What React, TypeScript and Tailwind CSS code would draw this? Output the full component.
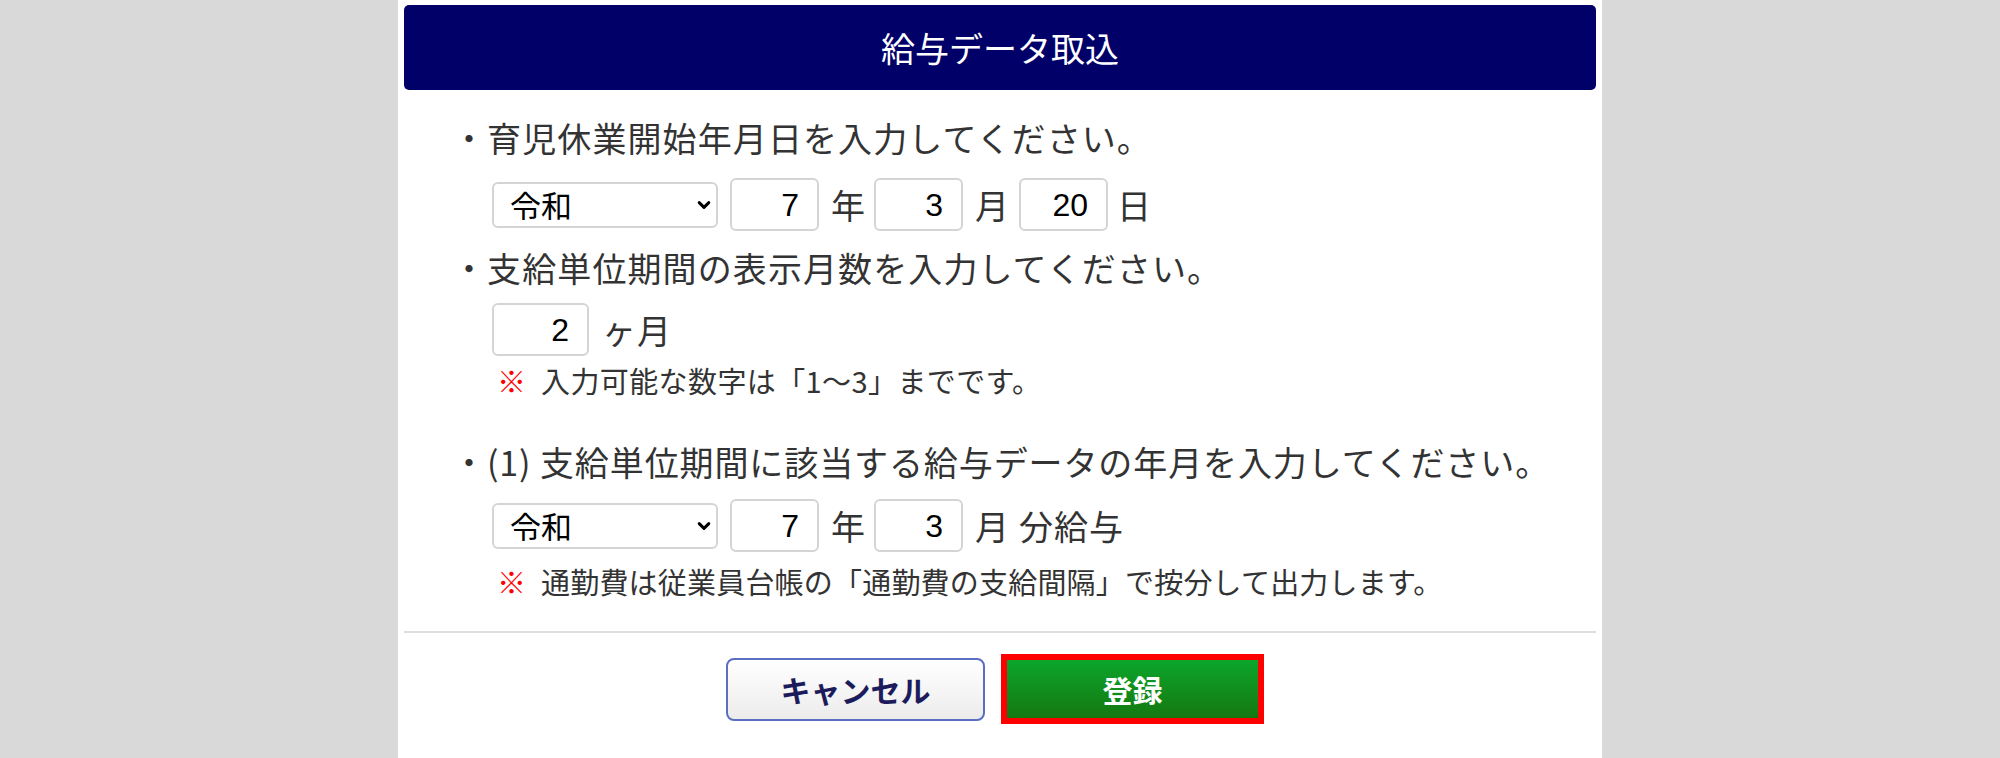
import React from "react";

const jp = { fontFamily: '"Noto Sans CJK JP", "Noto Sans", sans-serif' };

function Chevron() {
  return (
    <svg width="14" height="10" viewBox="0 0 14 10" className="absolute right-[7px] top-1/2 -translate-y-1/2 pointer-events-none">
      <path d="M2.2 2.6 L7 7.4 L11.8 2.6" fill="none" stroke="#000" strokeWidth="3" strokeLinecap="round" strokeLinejoin="round" />
    </svg>
  );
}

function EraSelect() {
  return (
    <div className="relative w-[226px] h-[46px]">
      <select
        defaultValue="令和"
        className="appearance-none w-full h-full border-2 border-[#d4d4d4] rounded-[6px] bg-white pl-[16px] text-[31px] text-black leading-none outline-none"
        style={jp}
      >
        <option>令和</option>
        <option>平成</option>
      </select>
      <Chevron />
    </div>
  );
}

function NumBox({ value, w }: { value: string; w: string }) {
  return (
    <div
      className={`${w} h-[53px] border-2 border-[#d4d4d4] rounded-[6px] bg-white flex items-center justify-end pr-[18px] text-[32px] text-black leading-none`}
      style={{ fontFamily: '"Liberation Sans", Arial, sans-serif' }}
    >
      {value}
    </div>
  );
}

export default function App() {
  return (
    <div className="w-full h-[758px] bg-[#d9d9d9] overflow-hidden" style={jp}>
      <div className="w-[1204px] h-[758px] mx-auto bg-white px-[6px] pt-[5px] flex flex-col">
        <div className="h-[85px] rounded-[5px] bg-[#000068] text-white text-[34px] leading-none flex items-center justify-center">
          給与データ取込
        </div>

        <div className="pl-[48px] text-[#333] flex flex-col">
          <div className="mt-[28px] h-[40px] flex items-center text-[34px] tracking-[1.1px] leading-none">
            ・育児休業開始年月日を入力してください。
          </div>

          <div className="mt-[20px] h-[53px] flex items-center pl-[40px] text-[34px] leading-none">
            <EraSelect />
            <div className="ml-[12px]"><NumBox value="7" w="w-[89px]" /></div>
            <span className="ml-[12px]">年</span>
            <div className="ml-[9px]"><NumBox value="3" w="w-[89px]" /></div>
            <span className="ml-[12px]">月</span>
            <div className="ml-[10px]"><NumBox value="20" w="w-[89px]" /></div>
            <span className="ml-[9px]">日</span>
          </div>

          <div className="mt-[17px] h-[40px] flex items-center text-[34px] tracking-[1.1px] leading-none">
            ・支給単位期間の表示月数を入力してください。
          </div>

          <div className="mt-[16px] h-[51px] flex items-center pl-[40px] text-[34px] leading-none">
            <NumBox value="2" w="w-[97px]" />
            <span className="ml-[13px] tracking-[1px]">ヶ月</span>
          </div>

          <div className="mt-[10px] h-[30px] flex items-center pl-[45px] text-[29px] leading-none">
            <span className="text-[#ff0000] font-bold">※</span>
            <span className="ml-[15px] tracking-[0.4px]">入力可能な数字は「1～3」までです。</span>
          </div>

          <div className="mt-[47px] h-[40px] flex items-center text-[34px] tracking-[0.9px] leading-none">
            ・(1) 支給単位期間に該当する給与データの年月を入力してください。
          </div>

          <div className="mt-[17px] h-[53px] flex items-center pl-[40px] text-[34px] leading-none">
            <EraSelect />
            <div className="ml-[12px]"><NumBox value="7" w="w-[89px]" /></div>
            <span className="ml-[12px]">年</span>
            <div className="ml-[9px]"><NumBox value="3" w="w-[89px]" /></div>
            <span className="ml-[12px]">月</span>
            <span className="ml-[10px] tracking-[1px]">分給与</span>
          </div>

          <div className="mt-[14px] h-[30px] flex items-center pl-[45px] text-[29px] leading-none">
            <span className="text-[#ff0000] font-bold">※</span>
            <span className="ml-[15px] tracking-[0.2px]">通勤費は従業員台帳の「通勤費の支給間隔」で按分して出力します。</span>
          </div>
        </div>

        <div className="mt-[35px] h-[2px] bg-[#dedede]" />

        <div className="mt-[21px] flex items-center justify-center gap-[16px] pr-[10px]">
          <button
            className="w-[259px] h-[63px] rounded-[8px] border-2 border-[#5b6fc2] bg-gradient-to-b from-white to-[#ececec] text-[30px] font-bold text-[#1c1c5c] leading-none flex items-center justify-center"
            style={jp}
          >
            キャンセル
          </button>
          <button
            className="w-[263px] h-[70px] border-[6px] border-[#ff0000] bg-gradient-to-b from-[#0aa62b] to-[#147810] text-[30px] font-bold text-white leading-none flex items-center justify-center"
            style={jp}
          >
            登録
          </button>
        </div>
      </div>
    </div>
  );
}
